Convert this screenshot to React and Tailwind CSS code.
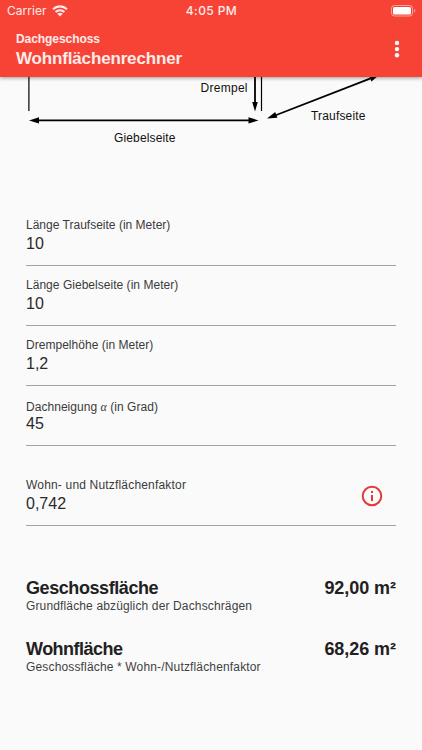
import React, { useState } from 'react';

const initialFields = [
  { id: 'traufseite', label: 'Länge Traufseite (in Meter)', value: '10', tracking: 'tracking-[0.01px]' },
  { id: 'giebelseite', label: 'Länge Giebelseite (in Meter)', value: '10', tracking: 'tracking-[0.03px]' },
  { id: 'drempel', label: 'Drempelhöhe (in Meter)', value: '1,2', tracking: 'tracking-[0.03px]' },
  { id: 'neigung', label: 'Dachneigung', symbol: 'α', unit: '(in Grad)', value: '45', tracking: 'tracking-[0.04px]' },
];

const results = [
  {
    title: 'Geschossfläche',
    hint: 'Grundfläche abzüglich der Dachschrägen',
    value: '92,00 m²',
    titleTracking: 'tracking-[-0.42px]',
    hintTracking: 'tracking-[0.14px]',
  },
  {
    title: 'Wohnfläche',
    hint: 'Geschossfläche * Wohn-/Nutzflächenfaktor',
    value: '68,26 m²',
    titleTracking: 'tracking-[-0.52px]',
    hintTracking: 'tracking-[0.155px]',
  },
];

const StatusBar = () => (
  <div className="grid h-[22px] grid-cols-3 items-center pl-[7px] pr-[6px] font-['Inter',sans-serif] text-[12px] leading-[22px] text-white/90">
    <div className="flex items-center gap-[5px]">
      <span className="tracking-[0.05px]">Carrier</span>
      <svg width="16" height="12" viewBox="0 0 16 12" fill="none" stroke="currentColor" strokeWidth="2.100">
        <path d="M1 4.2C5 .4 11 .4 15 4.2" />
        <path d="M3.6 7C6.1 4.8 9.9 4.8 12.4 7" />
        <path d="M8 11.6 5.3 8.8C6.8 7.5 9.2 7.5 10.7 8.8Z" fill="currentColor" stroke="none" />
      </svg>
    </div>
    <span className="text-center font-medium tracking-[0.4px]">4:05 PM</span>
    <svg className="justify-self-end" width="25" height="12" viewBox="0 0 25 12">
      <rect x="0.5" y="0.5" width="21" height="10.5" rx="3" fill="none" stroke="white" strokeOpacity="0.5" />
      <rect x="2" y="2" width="18" height="7.5" rx="1.6" fill="white" />
      <path d="M23 4v3.6c.8-.3 1.3-1 1.3-1.8S23.8 4.3 23 4Z" fill="white" fillOpacity="0.5" />
    </svg>
  </div>
);

const Header = () => (
  <header className="relative z-10 h-[77px] shrink-0 bg-[#f64336] text-white shadow-[0_1px_4px_rgba(0,0,0,0.4)]">
    <StatusBar />
    <div className="flex items-start justify-between pl-4 pr-[21px] pt-[9px]">
      <div className="pt-px text-white/90">
        <p className="text-[12px] font-bold leading-[15px] tracking-[-0.06px]">Dachgeschoss</p>
        <h1 className="text-[17px] font-bold leading-6 tracking-[-0.16px]">Wohnflächenrechner</h1>
      </div>
      <button aria-label="Menü" className="mt-[9px]">
        <svg width="8" height="18" viewBox="0 0 8 18" fill="white">
          <circle cx="4" cy="2.9" r="2.2" />
          <circle cx="4" cy="9.1" r="2.2" />
          <circle cx="4" cy="15.2" r="2.2" />
        </svg>
      </button>
    </div>
  </header>
);

// Lower part of the house sketch, the rest is scrolled under the header
const HouseSketch = () => (
  <svg className="block shrink-0" width="422" height="129" viewBox="0 77 422 129" fontFamily="'Liberation Sans', Arial, sans-serif" fontSize="12">
    <g stroke="black" fill="none">
      <path d="M28.9 70V111M261.5 70V111" strokeWidth="1.2" />
      <path d="M255 70V103M37 120.4H251" strokeWidth="1.8" />
      <path d="M275 115.5 370 78.7" strokeWidth="1.8" />
    </g>
    <path d="M255 111.500 252.200 102H257.800Z" />
    <path d="M29 120.400 39 117.200V123.600Z" />
    <path d="M258.500 120.400 248.500 117.200V123.600Z" />
    <path d="M267 118.500 275.200 111.900 277.400 117.700Z" />
    <path d="M378.500 75.500 369 76 371.400 81.600Z" />
    <g fill="#111">
      <text x="200.5" y="91.5" textLength="47">Drempel</text>
      <text x="114" y="142" textLength="61.5">Giebelseite</text>
      <text x="311" y="119.5" textLength="54.5">Traufseite</text>
    </g>
  </svg>
);

const InfoIcon = () => (
  <svg width="22" height="22" viewBox="0 0 22 22" fill="none" stroke="#e53935" strokeWidth="2">
    <circle cx="11" cy="11" r="9.3" />
    <path d="M11 10V16M11 6V8" />
  </svg>
);

const Field = ({ field, onChange, children }) => (
  <div className="flex h-[60px] items-start border-b border-[#a3a3a3] pt-3">
    <label className="flex min-w-0 flex-1 flex-col">
      <span
        className={`h-4 whitespace-pre text-[12px] text-[#3a3a3a] ${field.symbol ? 'leading-[18px]' : 'leading-[15px]'} ${field.tracking}`}
      >
        {field.label}
        {field.symbol && (
          <>
            {' '}
            <i className="font-['Liberation_Serif',serif]">{field.symbol}</i> {field.unit}
          </>
        )}
      </span>
      <input
        className="h-5 w-full bg-transparent text-[16px] leading-5 text-[#2a2a2a] outline-none"
        value={field.value}
        onChange={(e) => onChange(field.id, e.target.value)}
      />
    </label>
    {children}
  </div>
);

const App = () => {
  const [fields, setFields] = useState(initialFields);
  const [factor, setFactor] = useState('0,742');

  const handleChange = (id, value) => {
    setFields(fields.map((f) => (f.id === id ? { ...f, value } : f)));
  };

  return (
    <div className="flex h-[750px] w-[422px] flex-col overflow-hidden bg-[#fafafa] font-['Liberation_Sans',Arial,sans-serif]">
      <Header />
      <HouseSketch />
      <main className="px-[26px]">
        {fields.map((field) => (
          <Field key={field.id} field={field} onChange={handleChange} />
        ))}
        <div className="pt-5">
          <Field
            field={{ id: 'faktor', label: 'Wohn- und Nutzflächenfaktor', value: factor, tracking: 'tracking-[0.18px]' }}
            onChange={(id, value) => setFactor(value)}
          >
            <button aria-label="Info" className="mr-[13px] mt-[7px]">
              <InfoIcon />
            </button>
          </Field>
        </div>
        <div className="mt-[51px] flex flex-col gap-[23px]">
          {results.map((result) => (
            <div key={result.title} className="h-[38px] text-[#212121]">
              <div className="flex justify-between text-[18px] font-bold leading-[22px]">
                <h2 className={result.titleTracking}>{result.title}</h2>
                <span className="tracking-[-0.06px]">{result.value}</span>
              </div>
              <p className={`text-[12px] leading-[15px] text-[#3f3f3f] ${result.hintTracking}`}>{result.hint}</p>
            </div>
          ))}
        </div>
      </main>
    </div>
  );
};

export default App;
